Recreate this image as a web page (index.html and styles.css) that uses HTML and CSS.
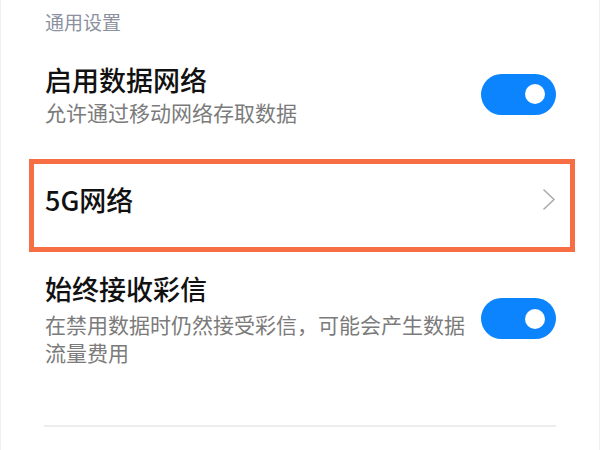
FILE: index.html
```html
<!DOCTYPE html>
<html lang="zh-CN">
<head>
<meta charset="utf-8">
<link rel="stylesheet" href="styles.css">
</head>
<body>
<div class="page">
  <div class="section-title">通用设置</div>

  <div class="row row-first">
    <div class="texts">
      <div class="title">启用数据网络</div>
      <div class="sub">允许通过移动网络存取数据</div>
    </div>
    <div class="toggle"><span class="knob"></span></div>
  </div>

  <div class="row row-nav">
    <div class="title">5G网络</div>
    <svg class="chev" width="12" height="21" viewBox="0 0 12 21"><path d="M1 1 L11 10.5 L1 20" fill="none" stroke="#ababab" stroke-width="1.6" stroke-linecap="round" stroke-linejoin="round"/></svg>
    <div class="highlight"></div>
  </div>

  <div class="row row-last">
    <div class="texts">
      <div class="title">始终接收彩信</div>
      <div class="sub sub-gap">在禁用数据时仍然接受彩信，可能会产生数据<br>流量费用</div>
    </div>
    <div class="toggle"><span class="knob"></span></div>
  </div>

  <div class="divider"></div>
</div>
</body>
</html>
```

FILE: styles.css
```css
html, body {
  margin: 0;
  padding: 0;
  background: #ffffff;
}
body {
  font-family: "Noto Sans CJK SC", "Noto Sans", sans-serif;
}
.page {
  width: 600px;
  height: 450px;
  box-sizing: border-box;
  padding: 0 44px;
  box-shadow: inset 1px 0 0 #f0f0f0, inset -1px 0 0 #f0f0f0;
  overflow: hidden;
}
.section-title {
  height: 44px;
  line-height: 44px;
  font-size: 19px;
  color: #8b91a0;
  padding-left: 1px;
}
.row {
  display: flex;
  align-items: center;
  justify-content: space-between;
}
.row-first {
  padding: 18px 0 18px;
}
.texts {
  display: flex;
  flex-direction: column;
  padding-left: 1px;
}
.title {
  font-size: 27px;
  line-height: 36px;
  font-weight: 500;
  color: #111111;
}
.sub {
  font-size: 21px;
  line-height: 28px;
  color: #7b7b7b;
}
.sub-gap {
  margin-top: 3px;
}
.row-nav {
  position: relative;
  height: 112px;
}
.row-nav .title {
  padding-left: 1px;
}
.chev {
  margin-right: 1px;
  margin-top: -1px;
}
.highlight {
  position: absolute;
  top: 15px;
  bottom: 4px;
  left: -15px;
  right: -19px;
  border: 5px solid #f76e44;
}
.row-last {
  padding-top: 15px;
}
.toggle {
  position: relative;
  width: 75px;
  height: 41px;
  border-radius: 21px;
  background: #0b84fe;
  flex-shrink: 0;
}
.knob {
  position: absolute;
  right: 11px;
  top: 10.5px;
  width: 20px;
  height: 20px;
  border-radius: 50%;
  background: #ffffff;
}
.divider {
  margin-top: 59px;
  height: 2px;
  background: #ececec;
}
```
